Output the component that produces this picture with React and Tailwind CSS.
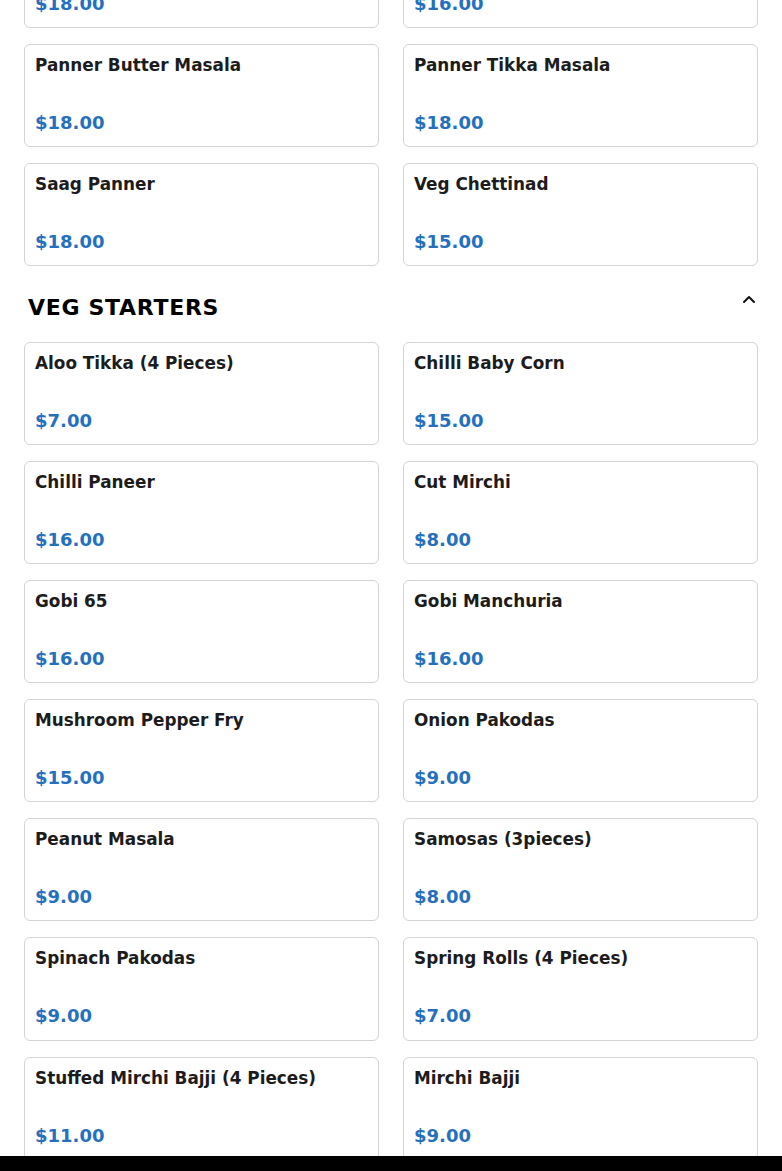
import { useState } from 'react';

const curries = [
  { name: 'Malai Kofta', price: 18 },
  { name: 'Navratan Korma', price: 16 },
  { name: 'Panner Butter Masala', price: 18 },
  { name: 'Panner Tikka Masala', price: 18 },
  { name: 'Saag Panner', price: 18 },
  { name: 'Veg Chettinad', price: 15 },
];

const starters = [
  { name: 'Aloo Tikka (4 Pieces)', price: 7 },
  { name: 'Chilli Baby Corn', price: 15 },
  { name: 'Chilli Paneer', price: 16 },
  { name: 'Cut Mirchi', price: 8 },
  { name: 'Gobi 65', price: 16 },
  { name: 'Gobi Manchuria', price: 16 },
  { name: 'Mushroom Pepper Fry', price: 15 },
  { name: 'Onion Pakodas', price: 9 },
  { name: 'Peanut Masala', price: 9 },
  { name: 'Samosas (3pieces)', price: 8 },
  { name: 'Spinach Pakodas', price: 9 },
  { name: 'Spring Rolls (4 Pieces)', price: 7 },
  { name: 'Stuffed Mirchi Bajji (4 Pieces)', price: 11 },
  { name: 'Mirchi Bajji', price: 9 },
];

function ItemCard({ item }) {
  return (
    <div className="h-[103.17px] rounded-md border border-[#d4d4d4] bg-white px-[10px] pt-[10px]">
      <h3 className="text-[16.85px] leading-[20px] font-bold text-[#1c1c1c]">{item.name}</h3>
      <p className="mt-[37px] text-[18px] leading-[22px] font-bold text-[#2570be]">
        ${item.price.toFixed(2)}
      </p>
    </div>
  );
}

function ItemGrid({ items }) {
  return (
    <div className="grid grid-cols-2 gap-x-6 gap-y-4">
      {items.map((item) => (
        <ItemCard key={item.name} item={item} />
      ))}
    </div>
  );
}

export default function App() {
  const [open, setOpen] = useState(true);

  return (
    <div className="h-screen overflow-hidden bg-white font-['DejaVu_Sans',sans-serif]">
      <div className="-mt-[75px] px-6">
        <ItemGrid items={curries} />

        <div className="mt-[28px] mb-[19.1px] flex items-start justify-between pl-1">
          <h2 className="text-[22px] leading-[28px] font-bold tracking-[0.7px] text-black">VEG STARTERS</h2>
          <button onClick={() => setOpen(!open)} className="-mt-[2px] mr-[1px]">
            <svg width="16" height="16" viewBox="0 0 16 16" fill="none" stroke="#111" strokeWidth="2" strokeLinecap="round" strokeLinejoin="round">
              <path d={open ? 'M3 10 L8 5 L13 10' : 'M3 6 L8 11 L13 6'} />
            </svg>
          </button>
        </div>

        {open && <ItemGrid items={starters} />}
      </div>

      <div className="fixed inset-x-0 bottom-0 h-[15px] bg-black" />
    </div>
  );
}
